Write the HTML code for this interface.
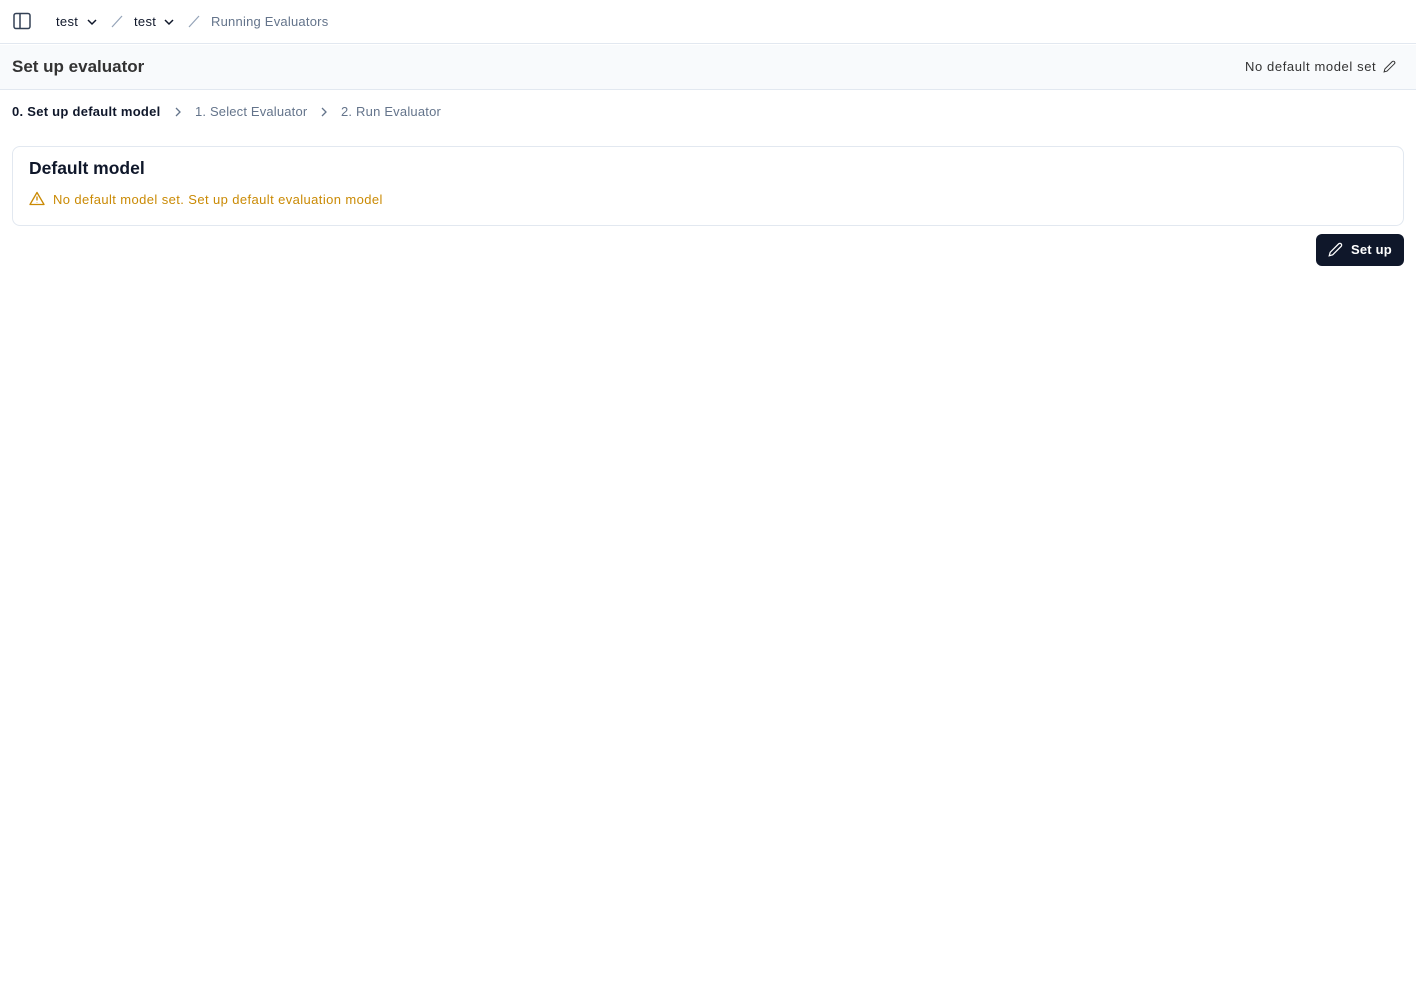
<!DOCTYPE html>
<html><head><meta charset="utf-8"><style>
*{box-sizing:border-box;margin:0;padding:0}
body{width:1416px;height:1000px;background:#fff;font-family:"Liberation Sans",sans-serif;color:#0f172a;position:relative;overflow:hidden}
.abs{position:absolute;white-space:nowrap}
</style></head><body>
<div class="abs" style="left:0;top:0;width:1416px;height:44px;border-bottom:1px solid #e2e8f0"></div>
<svg class="abs" style="left:13px;top:12px" width="18" height="18" viewBox="0 0 18 18" fill="none" stroke="#334155" stroke-width="1.5"><rect x="1" y="1.5" width="16" height="15" rx="2"/><line x1="7" y1="1.5" x2="7" y2="16.5"/></svg>
<div class="abs" style="left:56px;top:14px;font-size:13px;color:#0f172a;letter-spacing:0.3px">test</div>
<svg class="abs" style="left:87px;top:18px" width="10" height="8" viewBox="0 0 10 8" fill="none" stroke="#0f172a" stroke-width="1.5"><path d="M1 2l4 4 4-4"/></svg>
<svg class="abs" style="left:110px;top:14px" width="14" height="14" fill="none" stroke="#94a3b8" stroke-width="1.2"><path d="M2 13L12 2"/></svg>
<div class="abs" style="left:134px;top:14px;font-size:13px;letter-spacing:0.3px">test</div>
<svg class="abs" style="left:164px;top:18px" width="10" height="8" viewBox="0 0 10 8" fill="none" stroke="#0f172a" stroke-width="1.5"><path d="M1 2l4 4 4-4"/></svg>
<svg class="abs" style="left:187px;top:14px" width="14" height="14" fill="none" stroke="#94a3b8" stroke-width="1.2"><path d="M2 13L12 2"/></svg>
<div class="abs" style="left:211px;top:14px;font-size:13px;color:#64748b;letter-spacing:0.22px">Running Evaluators</div>

<div class="abs" style="left:0;top:45px;width:1416px;height:45px;background:#f8fafc;border-bottom:1px solid #e2e8f0"></div>
<div class="abs" style="left:12px;top:57px;font-size:17px;font-weight:bold;color:#333">Set up evaluator</div>
<div class="abs" style="left:1245px;top:59px;font-size:13px;color:#333;letter-spacing:0.6px">No default model set</div>
<svg class="abs" style="left:1383px;top:60px" width="13" height="13" viewBox="0 0 24 24" fill="none" stroke="#333" stroke-width="1.8"><path d="M17 3a2.8 2.8 0 1 1 4 4L7.5 20.5 2 22l1.5-5.5Z"/></svg>

<div class="abs" style="left:12px;top:104px;font-size:13px;font-weight:bold;color:#0f172a;letter-spacing:0.27px">0. Set up default model</div>
<svg class="abs" style="left:174px;top:107px" width="8" height="10" fill="none" stroke="#64748b" stroke-width="1.3"><path d="M2 1l4 4-4 4"/></svg>
<div class="abs" style="left:195px;top:104px;font-size:13px;color:#64748b;letter-spacing:0.17px">1. Select Evaluator</div>
<svg class="abs" style="left:320px;top:107px" width="8" height="10" fill="none" stroke="#64748b" stroke-width="1.3"><path d="M2 1l4 4-4 4"/></svg>
<div class="abs" style="left:341px;top:104px;font-size:13px;color:#64748b;letter-spacing:0.2px">2. Run Evaluator</div>

<div class="abs" style="left:12px;top:146px;width:1392px;height:80px;border:1px solid #e2e8f0;border-radius:8px"></div>
<div class="abs" style="left:29px;top:158px;font-size:17.5px;font-weight:bold;color:#0f172a">Default model</div>
<svg class="abs" style="left:29px;top:191px" width="16" height="15" viewBox="0 0 24 22" fill="none" stroke="#ca8a04" stroke-width="2" stroke-linejoin="round"><path d="M12 2L1.5 20h21Z"/><path d="M12 8v6M12 17v.5"/></svg>
<div class="abs" style="left:53px;top:192px;font-size:13px;color:#ca8a04;letter-spacing:0.4px">No default model set. Set up default evaluation model</div>

<div class="abs" style="left:1316px;top:234px;width:88px;height:32px;background:#0f172a;border-radius:6px"></div>
<svg class="abs" style="left:1328px;top:242px" width="15" height="15" viewBox="0 0 24 24" fill="none" stroke="#fff" stroke-width="2"><path d="M17 3a2.8 2.8 0 1 1 4 4L7.5 20.5 2 22l1.5-5.5Z"/></svg>
<div class="abs" style="left:1351px;top:242px;font-size:13px;font-weight:bold;color:#fff;letter-spacing:0.2px">Set up</div>
</body></html>
